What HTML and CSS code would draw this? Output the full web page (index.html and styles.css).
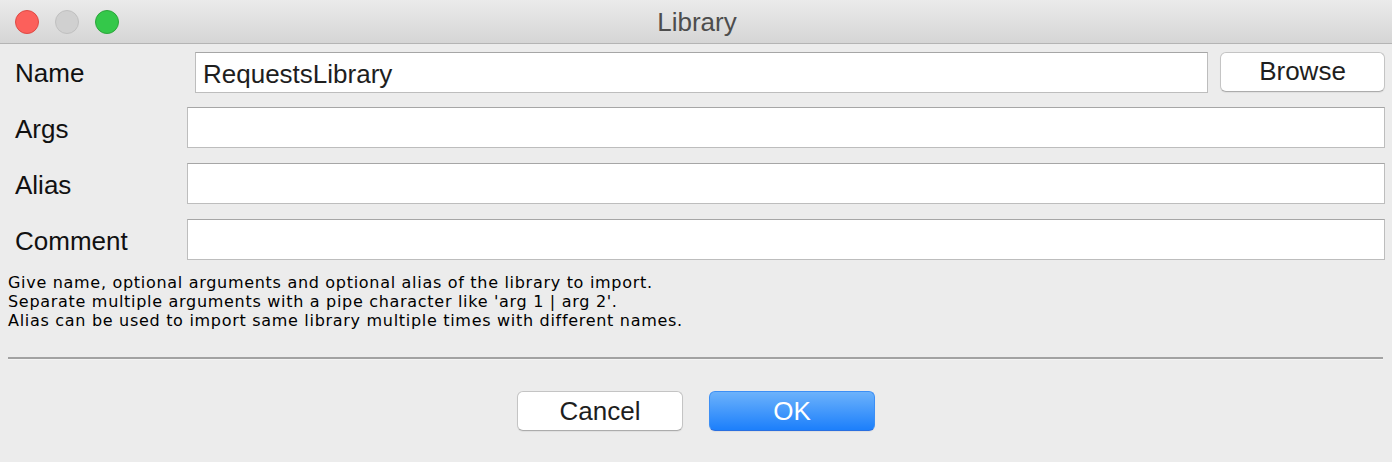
FILE: index.html
```html
<!DOCTYPE html>
<html lang="en">
<head>
    <meta charset="UTF-8">
    <title>Library</title>
    <link rel="stylesheet" href="styles.css">
</head>
<body>
  <div class="window">
    <div class="titlebar">
      <div class="lights">
        <span class="light red"></span>
        <span class="light off"></span>
        <span class="light green"></span>
      </div>
      <div class="title">Library</div>
    </div>

    <div class="form">
      <div class="row">
        <label class="lbl">Name</label>
        <input class="field name-field" type="text" value="RequestsLibrary">
        <button class="btn browse">Browse</button>
      </div>
      <div class="row">
        <label class="lbl">Args</label>
        <input class="field" type="text">
      </div>
      <div class="row">
        <label class="lbl">Alias</label>
        <input class="field" type="text">
      </div>
      <div class="row">
        <label class="lbl">Comment</label>
        <input class="field" type="text">
      </div>
    </div>

    <div class="help">
      Give name, optional arguments and optional alias of the library to import.<br>
      Separate multiple arguments with a pipe character like 'arg 1 | arg 2'.<br>
      Alias can be used to import same library multiple times with different names.
    </div>

    <div class="sep"></div>

    <div class="actions">
      <button class="btn">Cancel</button>
      <button class="btn primary">OK</button>
    </div>
  </div>
</body>
</html>
```

FILE: styles.css
```css
body {
    margin: 0;
    padding: 0;
    background-color: #ececec;
    font-family: "Liberation Sans", Arial, sans-serif;
    color: #111;
}

.window {
    width: 1392px;
    height: 462px;
    display: flex;
    flex-direction: column;
    background-color: #ececec;
}

.titlebar {
    height: 43px;
    border-bottom: 1px solid #b4b4b4;
    background: linear-gradient(#ebebeb, #d5d5d5);
    display: flex;
    align-items: center;
    justify-content: center;
    position: relative;
}

.lights {
    position: absolute;
    left: 15px;
    top: 10px;
    display: flex;
    gap: 16px;
}

.light {
    width: 24px;
    height: 24px;
    border-radius: 50%;
    box-sizing: border-box;
}

.red {
    background: #fc605b;
    border: 1px solid #de4a44;
}

.off {
    background: #d0d0d0;
    border: 1px solid #c0c0c0;
}

.green {
    background: #34c84a;
    border: 1px solid #2ca53b;
}

.title {
    font-size: 26px;
    color: #4d4d4d;
    margin-left: 2px;
    margin-top: 2px;
}

.form {
    padding: 7px 7px 0 15px;
    display: flex;
    flex-direction: column;
    gap: 15px;
}

.row {
    display: flex;
    align-items: center;
    height: 41px;
}

.lbl {
    width: 172px;
    font-size: 26px;
    color: #111;
    padding-top: 3px;
}

.field {
    flex: 1;
    height: 41px;
    box-sizing: border-box;
    margin: 0;
    border: 1px solid #bdbdbd;
    border-top-color: #a6a6a6;
    background: #fff;
    font-family: "Liberation Sans", Arial, sans-serif;
    font-size: 26px;
    color: #1e1e1e;
    padding: 3px 7px 0;
    outline: none;
}

.name-field {
    margin-left: 8px;
    margin-top: 2px;
}

.btn {
    width: 166px;
    height: 40px;
    box-sizing: border-box;
    border: 1px solid #c4c4c4;
    border-bottom-color: #acacac;
    border-radius: 6px;
    background: #fff;
    font-family: "Liberation Sans", Arial, sans-serif;
    font-size: 26px;
    color: #1e1e1e;
    padding: 0;
    box-shadow: 0 1px 1px rgba(0, 0, 0, 0.06);
}

.browse {
    width: 165px;
    margin-left: 12px;
}

.help {
    margin-top: 13px;
    padding-left: 8px;
    font-family: "DejaVu Sans", sans-serif;
    font-size: 16px;
    letter-spacing: 0.7px;
    line-height: 19px;
    color: #000;
}

.sep {
    margin: 27px 9px 0 8px;
    height: 2px;
    background: #a2a2a2;
    border-bottom: 1px solid #f4f4f4;
}

.actions {
    margin-top: 31px;
    display: flex;
    justify-content: center;
    gap: 26px;
}

.primary {
    background: linear-gradient(#6cb2fb, #1c7ffb);
    border-color: #3c8ff5;
    border-bottom-color: #2a6fe0;
    color: #fff;
}
```
